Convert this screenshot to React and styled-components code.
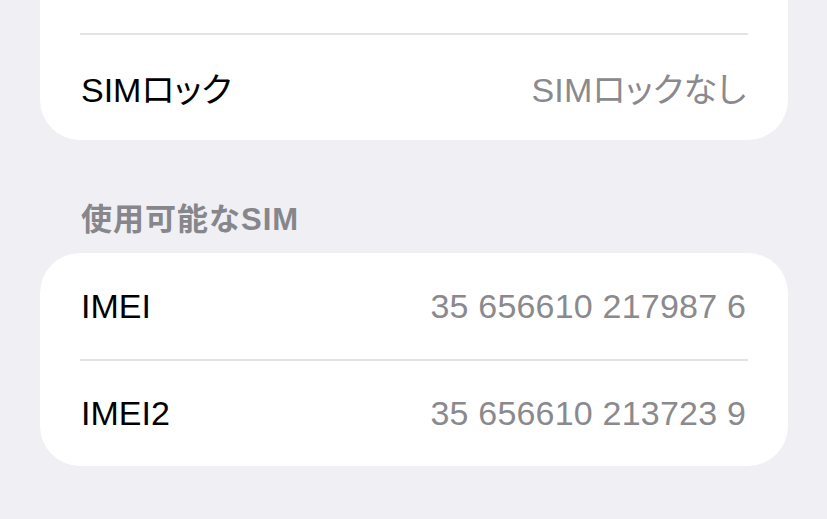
import React from 'react';
import styled, { createGlobalStyle } from 'styled-components';

const GlobalStyle = createGlobalStyle`
  html, body {
    margin: 0;
    padding: 0;
    background: #efeff4;
    overflow: hidden;
  }
  body {
    font-family: "Liberation Sans", "Noto Sans CJK JP", sans-serif;
    -webkit-font-smoothing: antialiased;
  }
`;

const Page = styled.div`
  width: 827px;
  height: 519px;
  padding: 0 39px 0 40px;
  box-sizing: border-box;
  overflow: hidden;
`;

const Group = styled.section`
  background: #ffffff;
  border-radius: 40px;
  overflow: hidden;
  margin-top: ${(p) => p.$offset || 0}px;
`;

const Row = styled.div`
  height: 106px;
  display: flex;
  align-items: center;
  justify-content: space-between;
  padding: 0 42px 0 41px;
  font-size: 34px;
  font-feature-settings: "palt";

  & + & {
    border-top: 2px solid #e3e3e6;
    margin: 0 40px;
    padding: 0 2px 0 1px;
    height: 105px;
  }
`;

const Label = styled.span`
  color: #000000;
`;

const Value = styled.span`
  color: #8a8a8e;
  letter-spacing: 0.2px;
`;

const SectionHeader = styled.h3`
  margin: 60px 0 13px 41px;
  height: 40px;
  line-height: 40px;
  font-size: 31px;
  font-weight: 700;
  letter-spacing: 1px;
  color: #86868b;
`;

export default function App() {
  return (
    <Page>
      <GlobalStyle />
      {/* first group scrolled partly out of view, only its lower row shows */}
      <Group $offset={-73}>
        <Row />
        <Row>
          <Label>SIMロック</Label>
          <Value>SIMロックなし</Value>
        </Row>
      </Group>
      <SectionHeader>使用可能なSIM</SectionHeader>
      <Group>
        <Row>
          <Label>IMEI</Label>
          <Value>35 656610 217987 6</Value>
        </Row>
        <Row>
          <Label>IMEI2</Label>
          <Value>35 656610 213723 9</Value>
        </Row>
      </Group>
    </Page>
  );
}
